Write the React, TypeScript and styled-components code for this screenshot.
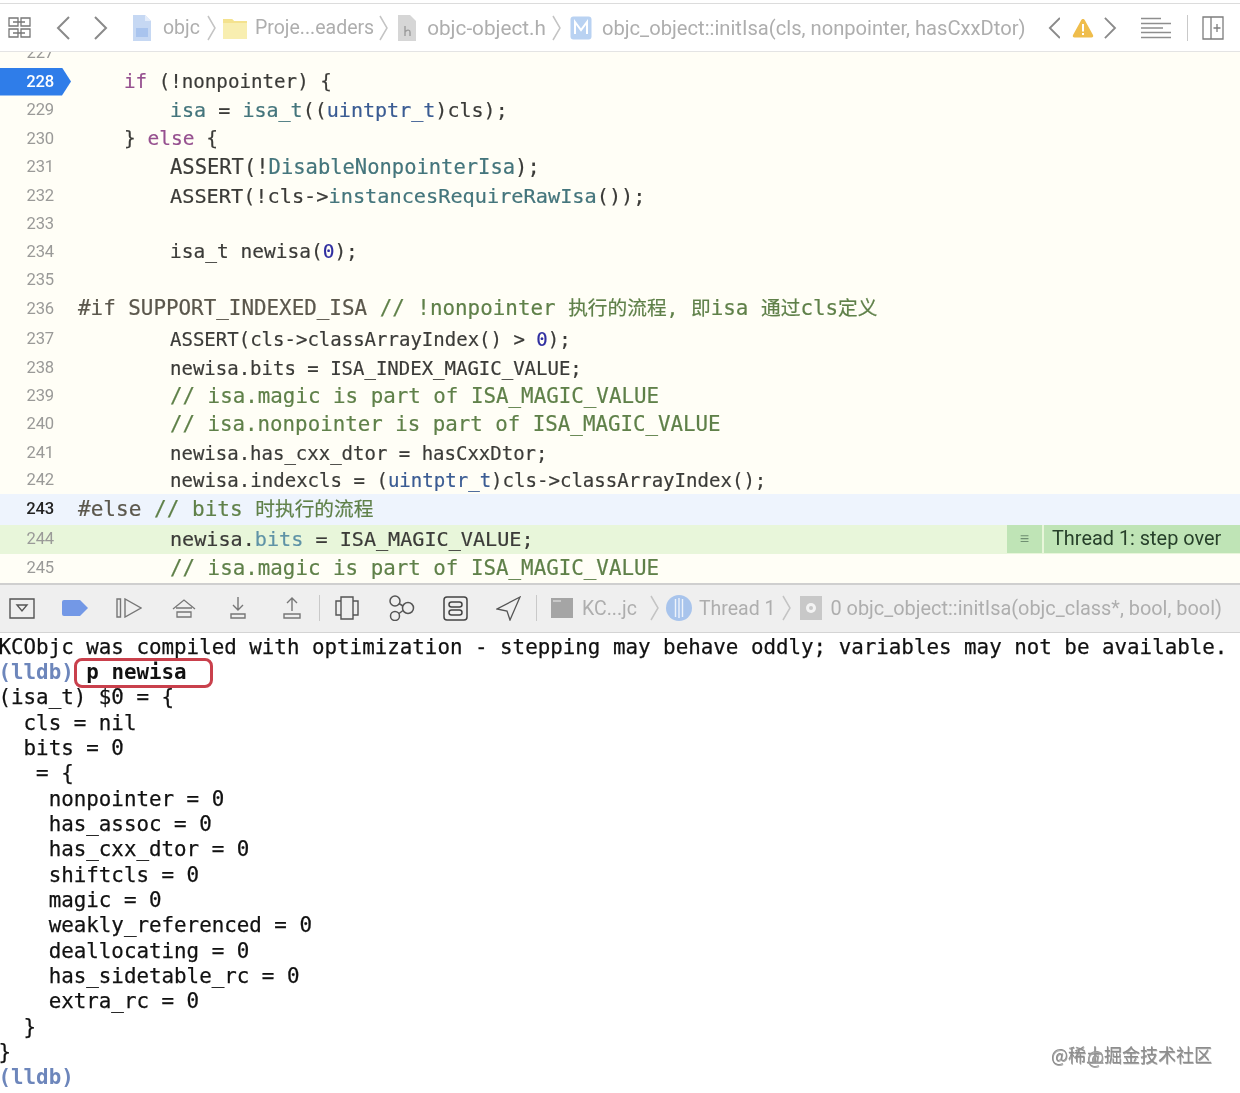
import React from 'react';
import styled, { createGlobalStyle } from 'styled-components';

const GlobalStyle = createGlobalStyle`
  html, body { margin: 0; padding: 0; background: #fff; overflow: hidden; }
  #root { width: 1240px; height: 1093px; }
`;

const MONO = `"DejaVu Sans Mono", "Noto Sans CJK SC", monospace`;
const UI = `Roboto, "Noto Sans", sans-serif`;

const Page = styled.div`
  position: relative;
  width: 1240px;
  height: 1093px;
  overflow: hidden;
  display: flex;
  flex-direction: column;
  background: #fff;
  filter: blur(0.35px);
`;

const JumpBar = styled.header`
  height: 47px;
  margin-top: 3px;
  border-top: 1px solid #dcdcdc;
  border-bottom: 1px solid #e4e4e4;
  display: flex;
  align-items: center;
  background: #fff;
  flex: none;
`;

const DebugBar = styled.div`
  height: 47px;
  flex: none;
  display: flex;
  align-items: center;
  background: #efefef;
  border-top: 2px solid #cfcfcf;
  border-bottom: 1px solid #d4d4d4;
`;

const Glyph = styled.svg<{ $ml: number }>`
  flex: none;
  margin-left: ${p => p.$ml}px;
  fill: none;
  stroke: #777;
  stroke-width: 1.5;
`;

const Crumb = styled.span<{ $ml: number; $size?: number }>`
  flex: none;
  margin-left: ${p => p.$ml}px;
  font: ${p => p.$size ?? 19.5}px ${UI};
  color: #aeaeae;
  white-space: nowrap;
`;

const Rule = styled.i<{ $ml: number }>`
  flex: none;
  width: 1px;
  height: 26px;
  margin-left: ${p => p.$ml}px;
  background: #c9c9c9;
`;

const Editor = styled.main`
  flex: none;
  background: #fffef6;
  display: flex;
  flex-direction: column;
`;

const Row = styled.div<{ $h: number; $bg?: string; $clip?: boolean }>`
  height: ${p => p.$h}px;
  display: flex;
  align-items: ${p => (p.$clip ? 'flex-end' : 'center')};
  background: ${p => p.$bg ?? 'transparent'};
  overflow: hidden;
`;

const Gutter = styled.div<{ $active?: boolean; $current?: boolean }>`
  flex: none;
  position: relative;
  width: 54px;
  height: 28px;
  text-align: right;
  font: ${p => (p.$active || p.$current ? 500 : 400)} 16.6px/27px ${UI};
  letter-spacing: -0.2px;
  color: ${p => (p.$active ? '#fff' : p.$current ? '#222' : '#9a9a98')};
  span { position: relative; }
`;

const ActiveTag = styled.i`
  position: absolute;
  left: 0;
  top: 0;
  width: 71px;
  height: 28px;
  background: #2f7de9;
  clip-path: polygon(0 0, 62px 0, 71px 50%, 62px 100%, 0 100%);
`;

const Code = styled.code<{ $indent: number; $size: number }>`
  flex: 1;
  padding-left: ${p => p.$indent - 54}px;
  font-family: ${MONO};
  font-size: ${p => p.$size}px;
  line-height: 28px;
  color: #3b3b38;
  -webkit-text-stroke: 0.2px currentColor;
  white-space: pre;
`;

const Tok = styled.span<{ $c: string }>`
  color: ${p => p.$c};
`;

const Han = styled.span`
  font-size: 19.7px;
`;

const ThreadNote = styled.div`
  flex: none;
  display: flex;
  gap: 2px;
  height: 28px;
  align-self: flex-start;
`;

const NoteIcon = styled.div`
  width: 35px;
  display: flex;
  align-items: center;
  justify-content: center;
  background: #bfe4b6;
  color: #6f8f72;
  font: 16px ${UI};
`;

const NoteLabel = styled.div`
  width: 188px;
  padding-left: 8px;
  background: #bfe4b6;
  color: #27402a;
  font: 19.9px/28px ${UI};
`;

const Console = styled.pre`
  flex: 1;
  margin: 0 0 0 -1.5px;
  padding-top: 2px;
  font-family: ${MONO};
  font-size: 20.83px;
  line-height: 25.35px;
  color: #111;
  -webkit-text-stroke: 0.25px #111;
  white-space: pre;
`;

const Prompt = styled.span`
  font-weight: 700;
  color: #6d86bb;
  -webkit-text-stroke: 0;
`;

const Command = styled.span`
  position: relative;
  font-weight: 700;
  -webkit-text-stroke: 0;
  &::after {
    content: '';
    position: absolute;
    left: -12px;
    right: -26px;
    top: -2px;
    bottom: -4px;
    border: 3.5px solid #c9404c;
    border-radius: 8px;
  }
`;

const Watermark = styled.div`
  position: absolute;
  left: 1051px;
  top: 1041px;
  font: 18px/26px "Noto Sans CJK SC", sans-serif;
  color: #8d8d8d;
  text-shadow: 0.5px 0.5px 0 #a8a8a8;
  white-space: nowrap;
  &::after {
    content: '@';
    position: absolute;
    left: 36px;
    top: 2px;
    color: #9a9a9a;
  }
`;

const C = {
  keyword: '#96508f',
  member: '#44757c',
  type: '#3b5c93',
  comment: '#5f8049',
  number: '#2f2ea0',
  bits: '#5f93a6',
  macro: '#5b574c',
};

type Line = {
  n: number;
  h: number;
  indent?: number;
  adv?: number;
  bg?: string;
  body?: React.ReactNode;
};

const LINES: Line[] = [
  { n: 228, h: 29, indent: 124, adv: 11.55, body: <><Tok $c={C.keyword}>if</Tok> (!nonpointer) {'{'}</> },
  { n: 229, h: 28.5, indent: 170, adv: 12.07, body: <><Tok $c={C.member}>isa</Tok> = <Tok $c={C.member}>isa_t</Tok>((<Tok $c={C.type}>uintptr_t</Tok>)cls);</> },
  { n: 230, h: 28.5, indent: 124, adv: 11.75, body: <>{'} '}<Tok $c={C.keyword}>else</Tok> {'{'}</> },
  { n: 231, h: 28.5, indent: 170, adv: 12.33, body: <>ASSERT(!<Tok $c={C.member}>DisableNonpointerIsa</Tok>);</> },
  { n: 232, h: 28.5, indent: 170, adv: 12.2, body: <>ASSERT(!cls-&gt;<Tok $c={C.member}>instancesRequireRawIsa</Tok>());</> },
  { n: 233, h: 28 },
  { n: 234, h: 28, indent: 170, adv: 11.75, body: <>isa_t newisa(<Tok $c={C.number}>0</Tok>);</> },
  { n: 235, h: 28 },
  { n: 236, h: 29.5, indent: 78, adv: 12.58, body: <Tok $c={C.macro}>#if SUPPORT_INDEXED_ISA <Tok $c={C.comment}>// !nonpointer <Han>执行的流程,</Han> <Han>即</Han>isa <Han>通过</Han>cls<Han>定义</Han></Tok></Tok> },
  { n: 237, h: 30, indent: 170, adv: 11.46, body: <>ASSERT(cls-&gt;classArrayIndex() &gt; <Tok $c={C.number}>0</Tok>);</> },
  { n: 238, h: 28, indent: 170, adv: 11.45, body: <>newisa.bits = ISA_INDEX_MAGIC_VALUE;</> },
  { n: 239, h: 28.5, indent: 170, adv: 12.54, body: <Tok $c={C.comment}>// isa.magic is part of ISA_MAGIC_VALUE</Tok> },
  { n: 240, h: 28.5, indent: 170, adv: 12.52, body: <Tok $c={C.comment}>// isa.nonpointer is part of ISA_MAGIC_VALUE</Tok> },
  { n: 241, h: 28, indent: 170, adv: 11.45, body: <>newisa.has_cxx_dtor = hasCxxDtor;</> },
  { n: 242, h: 27, indent: 170, adv: 11.48, body: <>newisa.indexcls = (<Tok $c={C.type}>uintptr_t</Tok>)cls-&gt;classArrayIndex();</> },
  { n: 243, h: 31, indent: 78, adv: 12.67, bg: '#eef4fd', body: <Tok $c={C.macro}>#else <Tok $c={C.comment}>// bits <Han>时执行的流程</Han></Tok></Tok> },
  { n: 244, h: 29, indent: 170, adv: 12.13, bg: '#e8f6da', body: <>newisa.<Tok $c={C.bits}>bits</Tok> = ISA_MAGIC_VALUE;</> },
  { n: 245, h: 29, indent: 170, adv: 12.54, body: <Tok $c={C.comment}>// isa.magic is part of ISA_MAGIC_VALUE</Tok> },
];

const CONSOLE_TAIL = `(isa_t) $0 = {
  cls = nil
  bits = 0
   = {
    nonpointer = 0
    has_assoc = 0
    has_cxx_dtor = 0
    shiftcls = 0
    magic = 0
    weakly_referenced = 0
    deallocating = 0
    has_sidetable_rc = 0
    extra_rc = 0
  }
}
`;

function Chevron({ ml, dir = 'right', h = 24 }: { ml: number; dir?: 'left' | 'right'; h?: number }) {
  const w = (h * 14) / 24;
  return (
    <Glyph $ml={ml} width={w} height={h} viewBox="0 0 14 24" style={{ stroke: '#8a8a8a' }}>
      <path d={dir === 'left' ? 'M13 1 2 12l11 11' : 'M1 1l11 11L1 23'} strokeWidth="2" />
    </Glyph>
  );
}

function Sep({ ml }: { ml: number }) {
  return (
    <Glyph $ml={ml} width="9" height="26" viewBox="0 0 9 26" style={{ stroke: '#c4c4c4' }}>
      <path d="M1 1l7 12-7 12" />
    </Glyph>
  );
}

function TopBar() {
  return (
    <JumpBar>
      <Glyph $ml={8} width="23" height="23" viewBox="0 0 23 23">
        <path d="M1 2h9v8H1zM13 2h9v8h-9zM1 13h9v8H1zM13 13h9v8h-9zM5 6h12M5 17h12" strokeWidth="1.3" />
      </Glyph>
      <Chevron ml={25} dir="left" />
      <Chevron ml={24} />
      <Glyph $ml={24} width="20" height="28" viewBox="0 0 20 28" style={{ stroke: 'none' }}>
        <path d="M1 1h12l6 6v20H1z" fill="#c6d8f3" />
        <path d="M13 1v6h6z" fill="#e3ecfa" />
        <rect x="4" y="14" width="12" height="9" fill="#a9c4ee" />
      </Glyph>
      <Crumb $ml={11}>objc</Crumb>
      <Sep ml={7} />
      <Glyph $ml={6} width="26" height="24" viewBox="0 0 26 24" style={{ stroke: 'none' }}>
        <path d="M1 3h9l2 2h13v18H1z" fill="#f8eeb0" />
        <path d="M1 3h9l2 2h13v2H1z" fill="#f4e28e" />
      </Glyph>
      <Crumb $ml={7}>Proje...eaders</Crumb>
      <Sep ml={5} />
      <Glyph $ml={9} width="20" height="28" viewBox="0 0 20 28" style={{ stroke: 'none' }}>
        <path d="M1 1h12l6 6v20H1z" fill="#d6d6d6" />
        <path d="M8 12v10M8 18c2-3 5-2 5 0v4" stroke="#9c9c9c" strokeWidth="1.4" fill="none" />
      </Glyph>
      <Crumb $ml={10} $size={20.7}>objc-object.h</Crumb>
      <Sep ml={6} />
      <Glyph $ml={9} width="22" height="24" viewBox="0 0 22 24" style={{ stroke: 'none' }}>
        <rect x="0.5" y="0.5" width="21" height="23" rx="3" fill="#b9d2f2" />
        <path d="M5 18V6l6 8 6-8v12" stroke="#fff" strokeWidth="2" fill="none" />
      </Glyph>
      <Crumb $ml={10} $size={20.17}>objc_object::initIsa(cls, nonpointer, hasCxxDtor)</Crumb>
      <Chevron ml={22} dir="left" h={22} />
      <Glyph $ml={12} width="22" height="20" viewBox="0 0 22 20" style={{ stroke: 'none' }}>
        <path d="M11 1c1 0 1.500.5 2 1.500l8 14.500c.6 1.300 0 2.500-1.500 2.500h-17C1 19.500.4 18.300 1 17L9 2.500C9.500 1.500 10 1 11 1z" fill="#efbd4c" />
        <rect x="10" y="6" width="2" height="7.500" fill="#fff" />
        <rect x="10" y="15" width="2" height="2" fill="#fff" />
      </Glyph>
      <Chevron ml={10} h={22} />
      <Glyph $ml={23} width="31" height="22" viewBox="0 0 31 22" style={{ stroke: '#8e8e8e' }}>
        <path d="M1 1.500h20M1 6.500h30M1 11h22M1 15.500h30M1 20.500h30" strokeWidth="1.4" />
      </Glyph>
      <Rule $ml={16} />
      <Glyph $ml={14} width="22" height="24" viewBox="0 0 22 24" style={{ stroke: '#7d7d7d' }}>
        <path d="M1 1h20v22H1zM9 1v22M15 8v8M11.500 12h7" strokeWidth="1.3" />
      </Glyph>
    </JumpBar>
  );
}

function BottomBar() {
  return (
    <DebugBar>
      <Glyph $ml={9} width="26" height="21" viewBox="0 0 26 21" style={{ stroke: '#555' }}>
        <path d="M1 1h24v19H1zM8 7h10l-5 6z" strokeWidth="1.4" />
      </Glyph>
      <Glyph $ml={27} width="26" height="16" viewBox="0 0 26 16" style={{ stroke: 'none' }}>
        <path d="M2 0h16l8 8-8 8H2a2 2 0 0 1-2-2V2a2 2 0 0 1 2-2z" fill="#7398e6" />
      </Glyph>
      <Glyph $ml={28} width="26" height="20" viewBox="0 0 26 20">
        <path d="M1 1h3.500v18H1zM9 1v18l16-9z" strokeWidth="1.4" />
      </Glyph>
      <Glyph $ml={30} width="24" height="20" viewBox="0 0 24 20">
        <path d="M1 11 12 2l11 9M5 14h14v5H5zM4 10h16" strokeWidth="1.3" />
      </Glyph>
      <Glyph $ml={32} width="20" height="22" viewBox="0 0 20 22">
        <path d="M10 0v13M5 8l5 5 5-5M3 17h14v4H3z" strokeWidth="1.4" />
      </Glyph>
      <Glyph $ml={34} width="20" height="22" viewBox="0 0 20 22">
        <path d="M10 14V1M5 6l5-5 5 5M2 17h16v4H2z" strokeWidth="1.4" />
      </Glyph>
      <Rule $ml={17} />
      <Glyph $ml={15} width="24" height="24" viewBox="0 0 24 24" style={{ stroke: '#555' }}>
        <path d="M6 1h12v22H6zM6 5H1v14h5M18 5h5v14h-5" strokeWidth="1.4" />
      </Glyph>
      <Glyph $ml={29} width="27" height="26" viewBox="0 0 27 26" style={{ stroke: '#555' }}>
        <circle cx="7" cy="6" r="5" />
        <circle cx="20" cy="13" r="5.500" />
        <circle cx="7" cy="21" r="4.500" />
        <path d="M11 8.500l4 2.500M11 18.500l4-3" />
      </Glyph>
      <Glyph $ml={28} width="25" height="25" viewBox="0 0 25 25" style={{ stroke: '#444' }}>
        <rect x="1" y="1" width="23" height="23" rx="3" />
        <rect x="6" y="6" width="13" height="5" rx="2.500" />
        <rect x="6" y="14" width="13" height="5" rx="2.500" />
      </Glyph>
      <Glyph $ml={28} width="25" height="25" viewBox="0 0 25 25" style={{ stroke: '#555' }}>
        <path d="M24 1 1 13l10 2 3 9z" strokeWidth="1.3" />
      </Glyph>
      <Rule $ml={15} />
      <Glyph $ml={14} width="22" height="20" viewBox="0 0 22 20" style={{ stroke: 'none' }}>
        <rect width="22" height="20" fill="#a5a5a5" />
        <rect x="2" y="2" width="8" height="2" fill="#c9c9c9" />
      </Glyph>
      <Crumb $ml={9}>KC...jc</Crumb>
      <Sep ml={13} />
      <Glyph $ml={7} width="26" height="26" viewBox="0 0 26 26" style={{ stroke: 'none' }}>
        <circle cx="13" cy="13" r="13" fill="#a8c4ec" />
        <path d="M9.500 4v18M13 3v20M16.500 4v18" stroke="#eef3fb" strokeWidth="1.4" />
      </Glyph>
      <Crumb $ml={7}>Thread 1</Crumb>
      <Sep ml={7} />
      <Glyph $ml={9} width="22" height="24" viewBox="0 0 22 24" style={{ stroke: 'none' }}>
        <rect width="22" height="24" fill="#c8c8c8" />
        <circle cx="11" cy="12" r="5" fill="#f3f3f3" />
        <circle cx="11" cy="12" r="2" fill="#c8c8c8" />
      </Glyph>
      <Crumb $ml={8} $size={19.9}>0 objc_object::initIsa(objc_class*, bool, bool)</Crumb>
    </DebugBar>
  );
}

export default function App() {
  return (
    <Page>
      <GlobalStyle />
      <TopBar />
      <Editor>
        <Row $h={15} $clip>
          <Gutter><span>227</span></Gutter>
        </Row>
        {LINES.map(line => {
          const size = (line.adv ?? 12) / 0.602;
          return (
            <Row key={line.n} $h={line.h} $bg={line.bg}>
              <Gutter $active={line.n === 228} $current={line.n === 243}>
                {line.n === 228 && <ActiveTag />}
                <span>{line.n}</span>
              </Gutter>
              {line.body ? <Code $indent={line.indent ?? 78} $size={size}>{line.body}</Code> : <Code $indent={78} $size={19} />}
              {line.n === 244 && (
                <ThreadNote>
                  <NoteIcon>≡</NoteIcon>
                  <NoteLabel>Thread 1: step over</NoteLabel>
                </ThreadNote>
              )}
            </Row>
          );
        })}
      </Editor>
      <BottomBar />
      <Console>
        {'KCObjc was compiled with optimization - stepping may behave oddly; variables may not be available.\n'}
        <Prompt>(lldb)</Prompt> <Command>p newisa</Command>
        {'\n' + CONSOLE_TAIL}
        <Prompt>(lldb)</Prompt>
      </Console>
      <Watermark>@稀土掘金技术社区</Watermark>
    </Page>
  );
}
